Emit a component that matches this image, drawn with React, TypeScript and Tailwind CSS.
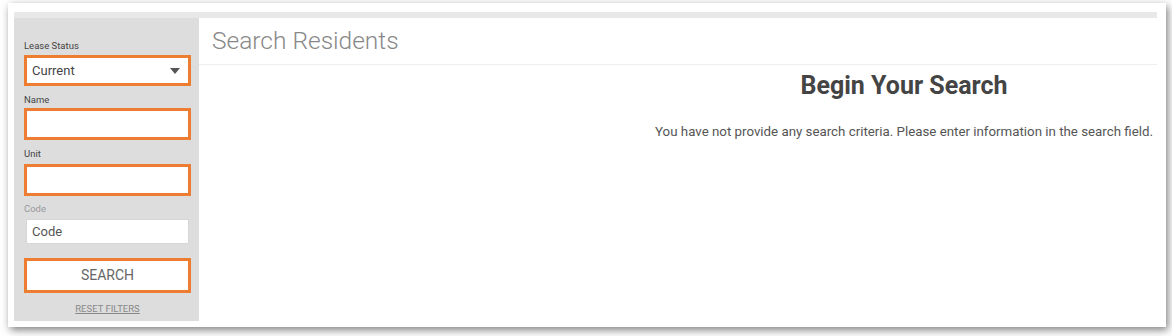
import React from 'react';

const orange = 'border-[3px] border-[#ed7d31]';

const Label: React.FC<{ text: string; muted?: boolean; className?: string }> = ({ text, muted, className }) => (
  <div className={`text-[9.5px] leading-[12px] ${muted ? 'text-[#999]' : 'text-[#444]'} ${className ?? ''}`}>{text}</div>
);

const App: React.FC = () => {
  return (
    <div className="w-[1172px] h-[336px] bg-white pl-[8px] pt-[3px] font-['Roboto',sans-serif]">
      <div className="w-[1158px] h-[324px] bg-white shadow-[2px_3px_8px_rgba(0,0,0,0.5)] pl-[6px] pt-[9px] pr-[9px] flex flex-col">
        <div className="h-[6px] bg-[#e8e8e8]" />
        <div className="flex h-[303px]">
          {/* filters */}
          <aside className="w-[185px] bg-[#dddddd] pl-[10px] pr-[8px] pt-[22px] flex flex-col">
            <Label text="Lease Status" />
            <div className={`mt-[3px] h-[31px] ${orange} bg-white flex items-center justify-between pl-[5px] pr-[8px]`}>
              <span className="text-[13px] text-[#444]">Current</span>
              <svg width="10" height="6" viewBox="0 0 10 6"><path d="M0 0h10L5 6z" fill="#555" /></svg>
            </div>

            <Label text="Name" className="mt-[8px]" />
            <div className={`mt-[2px] h-[32px] ${orange} bg-white`} />

            <Label text="Unit" className="mt-[8px]" />
            <div className={`mt-[4px] h-[32px] ${orange} bg-white`} />

            <Label text="Code" muted className="mt-[7px]" />
            <div className="mt-[4px] mx-[2px] h-[25px] bg-white border border-[#d6d6d6] rounded-[2px] flex items-center pl-[5px]">
              <span className="text-[13px] text-[#555]">Code</span>
            </div>

            <button className={`mt-[14px] h-[35px] ${orange} bg-white text-[14px] text-[#666]`}>SEARCH</button>

            <a className="mt-[9px] self-center text-[9.5px] text-[#888] underline">RESET FILTERS</a>
          </aside>

          {/* results */}
          <main className="flex-1 flex flex-col bg-white">
            <div className="h-[47px] border-b border-[#eeeeee] pl-[13px] flex items-center">
              <h1 className="text-[24.5px] font-light text-[#888] leading-none">Search Residents</h1>
            </div>
            <div className="self-end w-[506px] flex flex-col items-center">
              <h2 className="mt-[7px] text-[25px] font-bold text-[#444] leading-[28px]">Begin Your Search</h2>
              <p className="mt-[22px] text-[13.3px] text-[#555] whitespace-nowrap">
                You have not provide any search criteria. Please enter information in the search field.
              </p>
            </div>
          </main>
        </div>
      </div>
    </div>
  );
};

export default App;
